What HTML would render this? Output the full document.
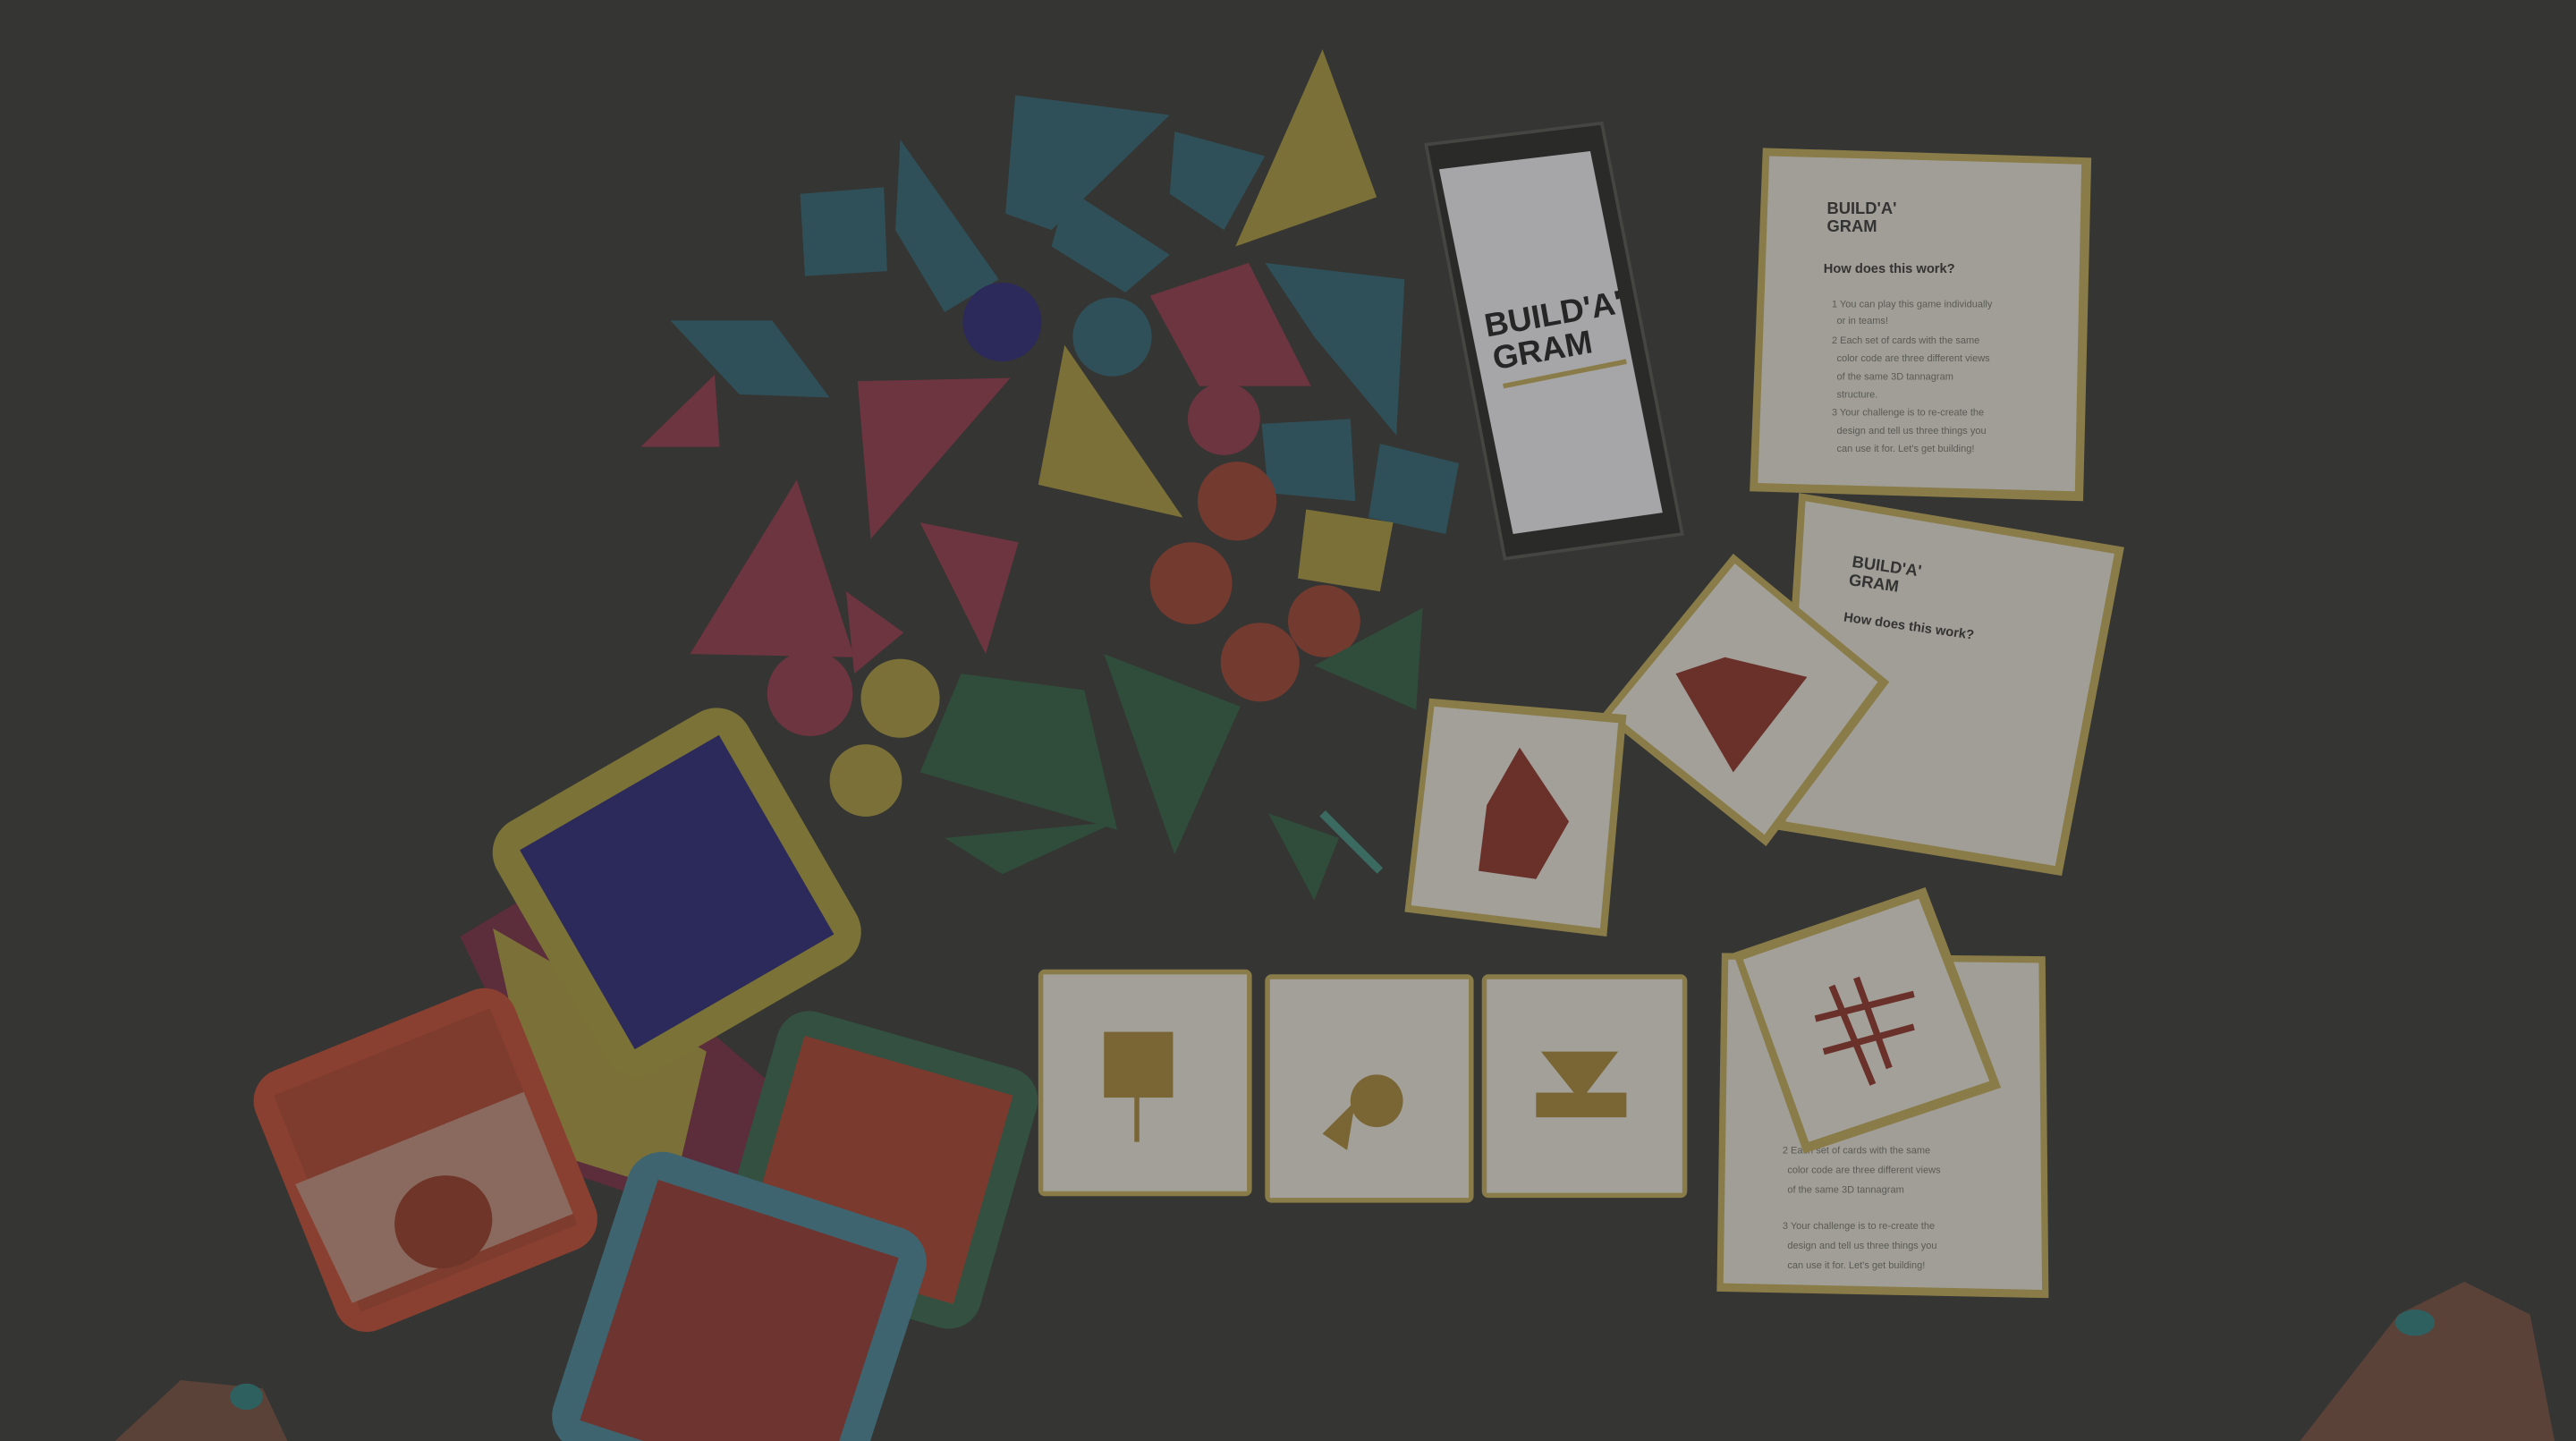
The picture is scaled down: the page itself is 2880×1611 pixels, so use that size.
<!DOCTYPE html>
<html><head><meta charset="utf-8"><style>
html,body{margin:0;padding:0;width:2880px;height:1611px;overflow:hidden;background:#343432;}
svg{display:block}
text{font-family:"Liberation Sans",sans-serif;}
</style></head><body>
<svg width="2880" height="1611" viewBox="0 0 1568 877" preserveAspectRatio="none" xmlns="http://www.w3.org/2000/svg">
<rect width="1568" height="877" fill="#353533"/>

<g stroke="none">
<polygon points="487,118 538,114 540,165 490,168" fill="#2f5058"/>
<polygon points="618,58 712,70 640,140 612,130" fill="#2f5058"/>
<polygon points="548,85 608,170 575,190 545,140" fill="#2f5058"/>
<polygon points="715,80 770,95 745,140 712,118" fill="#2f5058"/>
<polygon points="650,115 712,155 685,178 640,150" fill="#2f5058"/>
<polygon points="408,195 470,195 505,242 450,240" fill="#2f5058"/>
<polygon points="770,160 855,170 850,265 800,205" fill="#2f5058"/>
<circle cx="677" cy="205" r="24" fill="#2f5058"/>
<polygon points="768,258 822,255 825,305 772,300" fill="#2f5058"/>
<polygon points="840,270 888,282 880,325 833,315" fill="#2f5058"/>
<polygon points="805,30 838,120 752,150" fill="#7b7038"/>
<polygon points="648,210 720,315 632,295" fill="#7b7038"/>
<polygon points="795,310 848,318 840,360 790,352" fill="#7b7038"/>
<circle cx="548" cy="425" r="24" fill="#7b7038"/>
<circle cx="527" cy="475" r="22" fill="#7b7038"/>
<polygon points="522,232 615,230 530,328" fill="#6c3540"/>
<polygon points="485,292 520,400 420,398" fill="#6c3540"/>
<polygon points="390,272 435,228 438,272" fill="#6c3540"/>
<polygon points="700,180 760,160 798,235 730,235" fill="#6c3540"/>
<polygon points="560,318 620,330 600,398" fill="#6c3540"/>
<polygon points="515,360 550,385 520,410" fill="#6c3540"/>
<circle cx="493" cy="422" r="26" fill="#6c3540"/>
<circle cx="745" cy="255" r="22" fill="#6c3540"/>
<circle cx="753" cy="305" r="24" fill="#733a30"/>
<circle cx="725" cy="355" r="25" fill="#733a30"/>
<circle cx="806" cy="378" r="22" fill="#733a30"/>
<circle cx="767" cy="403" r="24" fill="#733a30"/>
<circle cx="610" cy="196" r="24" fill="#2c2a5a"/>
<polygon points="585,410 660,420 680,505 560,470" fill="#2f4d3a"/>
<polygon points="672,398 755,430 715,520" fill="#2f4d3a"/>
<polygon points="575,510 680,500 610,532" fill="#2f4d3a"/>
<polygon points="800,405 866,370 862,432" fill="#2f4d3a"/>
<polygon points="772,495 815,510 800,548" fill="#2f4d3a"/>
<line x1="805" y1="495" x2="840" y2="530" stroke="#3a6a60" stroke-width="5"/>
</g>

<!-- trays -->
<polygon points="280,570 330,540 470,660 440,745 350,715" fill="#5c2d3a"/>
<polygon points="300,565 430,640 410,725 330,700" fill="#7b7038"/>
<g transform="rotate(-30 412 543)"><rect x="324" y="455" width="176" height="176" rx="22" fill="#7b7237"/><rect x="342" y="473" width="140" height="140" fill="#2c2a5a"/></g>
<g transform="rotate(16 535 712)"><rect x="453" y="630" width="164" height="164" rx="20" fill="#335040"/><rect x="469" y="646" width="132" height="132" fill="#7a3a2e"/></g>
<g transform="rotate(-22 259 706)"><rect x="174" y="621" width="170" height="170" rx="20" fill="#8a4030"/><rect x="188" y="635" width="142" height="142" fill="#7e3c2e"/><polygon points="180,690 330,690 330,770 185,770" fill="#8a6a5e"/><ellipse cx="255" cy="745" rx="30" ry="28" fill="#6e3528"/></g>
<g transform="rotate(18 450 815)"><rect x="355" y="720" width="190" height="190" rx="22" fill="#3e6470"/><rect x="373" y="738" width="154" height="154" fill="#6e3530"/></g>

<!-- phone -->
<polygon points="868,88 975,75 1024,325 916,340" fill="#2a2a29" stroke="#454542" stroke-width="2"/>
<polygon points="876,103 968,92 1012,312 921,325" fill="#a6a6a8"/>
<text x="905" y="205" font-size="20" font-weight="bold" fill="#262626" transform="rotate(-10 905 205)">BUILD'A'</text>
<text x="910" y="225" font-size="20" font-weight="bold" fill="#262626" transform="rotate(-10 910 225)">GRAM</text>
<line x1="915" y1="235" x2="990" y2="220" stroke="#8a7c48" stroke-width="3"/>

<!-- instruction cards -->
<polygon points="1073,90 1273,96 1268,305 1065,299" fill="#8a7c48"/>
<polygon points="1077,95 1267,100 1263,299 1070,294" fill="#a09e96"/>
<text x="1112" y="130" font-size="10" font-weight="bold" fill="#333">BUILD'A'</text>
<text x="1112" y="141" font-size="10" font-weight="bold" fill="#333">GRAM</text>
<text x="1110" y="166" font-size="8" font-weight="bold" fill="#333">How does this work?</text>
<g font-size="6" fill="#5a5a56"><text x="1115" y="187">1 You can play this game individually</text><text x="1118" y="197">or in teams!</text><text x="1115" y="209">2 Each set of cards with the same</text><text x="1118" y="220">color code are three different views</text><text x="1118" y="231">of the same 3D tannagram</text><text x="1118" y="242">structure.</text><text x="1115" y="253">3 Your challenge is to re-create the</text><text x="1118" y="264">design and tell us three things you</text><text x="1118" y="275">can use it for. Let's get building!</text></g>

<polygon points="1095,300 1293,333 1255,533 1082,505" fill="#8a7c48"/>
<polygon points="1099,305 1287,337 1251,527 1087,500" fill="#a09e96"/>
<text x="1127" y="345" font-size="10" font-weight="bold" fill="#333" transform="rotate(8 1127 345)">BUILD'A'</text>
<text x="1125" y="356" font-size="10" font-weight="bold" fill="#333" transform="rotate(8 1125 356)">GRAM</text>
<text x="1122" y="378" font-size="8" font-weight="bold" fill="#333" transform="rotate(8 1122 378)">How does this work?</text>
<polygon points="1055,337 1150,415 1075,515 975,435" fill="#8a7c48"/>
<polygon points="1056,343 1143,415 1074,508 981,434" fill="#a2a098"/>
<polygon points="1050,400 1100,412 1055,470 1020,410" fill="#6a302a"/>
<polygon points="870,425 990,435 978,570 855,555" fill="#8a7c48"/>
<polygon points="873,430 985,440 974,565 859,551" fill="#a2a098"/>
<polygon points="925,455 955,500 935,535 900,530 905,490" fill="#6a302a"/>

<rect x="632" y="590" width="130" height="138" rx="4" fill="#8a7c48"/><rect x="635" y="593" width="124" height="132" fill="#a2a098"/>
<rect x="672" y="628" width="42" height="40" fill="#7a6634"/><line x1="692" y1="665" x2="692" y2="695" stroke="#7a6634" stroke-width="3"/>
<rect x="770" y="593" width="127" height="139" rx="4" fill="#8a7c48"/><rect x="773" y="596" width="121" height="133" fill="#a2a098"/>
<circle cx="838" cy="670" r="16" fill="#7a6634"/><polygon points="805,690 825,670 820,700" fill="#7a6634"/>
<rect x="902" y="593" width="125" height="136" rx="4" fill="#8a7c48"/><rect x="905" y="596" width="119" height="130" fill="#a2a098"/>
<polygon points="938,640 985,640 962,670" fill="#7a6634"/><rect x="935" y="665" width="55" height="15" fill="#7a6634"/>

<polygon points="1048,580 1245,582 1247,790 1045,786" fill="#8a7c48"/>
<polygon points="1052,584 1241,586 1243,785 1049,781" fill="#a09e96"/>
<g font-size="6" fill="#5a5a56"><text x="1085" y="702">2 Each set of cards with the same</text><text x="1088" y="714">color code are three different views</text><text x="1088" y="726">of the same 3D tannagram</text><text x="1085" y="748">3 Your challenge is to re-create the</text><text x="1088" y="760">design and tell us three things you</text><text x="1088" y="772">can use it for. Let's get building!</text></g>
<polygon points="1055,580 1172,540 1218,662 1098,702" fill="#8a7c48"/>
<polygon points="1061,584 1168,547 1211,658 1101,695" fill="#a2a098"/>
<g stroke="#6a302a" stroke-width="4"><line x1="1115" y1="600" x2="1140" y2="660"/><line x1="1130" y1="595" x2="1150" y2="650"/><line x1="1105" y1="620" x2="1165" y2="605"/><line x1="1110" y1="640" x2="1165" y2="625"/></g>

<polygon points="1400,877 1460,800 1500,780 1540,800 1555,877" fill="#5a4238"/>
<ellipse cx="1470" cy="805" rx="12" ry="8" fill="#2e6060"/>
<polygon points="70,877 110,840 160,845 175,877" fill="#5a4238"/>
<ellipse cx="150" cy="850" rx="10" ry="8" fill="#2e6060"/>
</svg>
</body></html>
